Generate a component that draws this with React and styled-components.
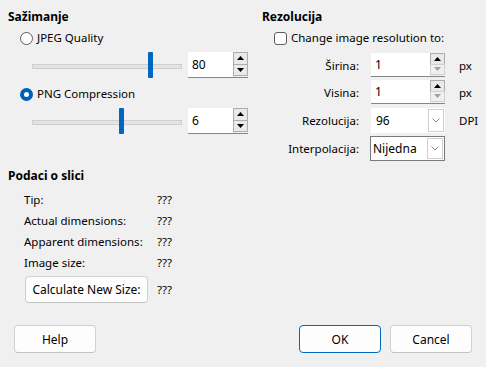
import React from "react";
import styled, { createGlobalStyle } from "styled-components";

const Global = createGlobalStyle`
  html, body { margin: 0; padding: 0; background: #f0f0f0; }
  body { font-family: "Noto Sans", "Open Sans", sans-serif; font-size: 11.5px; color: #000; }
  * { box-sizing: border-box; }
`;

const Page = styled.div`
  width: 486px;
  height: 367px;
  padding: 9px 14px 0 8px;
  display: flex;
  flex-direction: column;
`;

const Top = styled.div`
  display: grid;
  grid-template-columns: 254px 1fr;
`;

const Column = styled.div`
  display: flex;
  flex-direction: column;
`;

const Title = styled.div`
  font-weight: 700;
  font-size: 12px;
  line-height: 16px;
  height: 16px;
  margin-top: ${(p) => p.$mt || 0}px;
`;

const OptionRow = styled.label`
  display: flex;
  align-items: center;
  gap: 4px;
  height: 16px;
  margin-top: ${(p) => p.$mt}px;
  padding-left: ${(p) => p.$pl}px;
  line-height: 16px;
`;

const Radio = styled.span`
  width: 13px;
  height: 13px;
  border-radius: 50%;
  border: ${(p) => (p.$checked ? "4px solid #005fb8" : "1px solid #5d5d5d")};
  background: #fff;
  flex: none;
`;

const Check = styled.span`
  width: 13px;
  height: 13px;
  border-radius: 3px;
  border: 1px solid #5d5d5d;
  background: #fdfdfd;
  flex: none;
`;

const SliderRow = styled.div`
  display: flex;
  align-items: center;
  height: 26px;
  margin-top: ${(p) => p.$mt}px;
  padding-left: 24px;
  gap: 6px;
`;

const Track = styled.div`
  position: relative;
  width: 150px;
  height: 26px;
  &::before {
    content: "";
    position: absolute;
    left: 0;
    right: 0;
    top: 12px;
    height: 3px;
    background: #e3e3e3;
    border: 1px solid #cfcfcf;
  }
`;

const Thumb = styled.div`
  position: absolute;
  top: 0;
  width: 5px;
  height: 26px;
  background: #0067c0;
  border-radius: 1px;
`;

const Spin = styled.div`
  display: flex;
  width: ${(p) => p.$w}px;
  height: ${(p) => p.$h}px;
  border-bottom: 1px solid #868686;
  background: #fff;
`;

const SpinText = styled.div`
  flex: 1;
  padding-left: 4px;
  display: flex;
  align-items: center;
  font-size: 12px;
`;

const SpinButtons = styled.div`
  width: 15px;
  display: flex;
  flex-direction: column;
  background: #f0f0f0;
  padding-bottom: 1px;
`;

const SpinBtn = styled.div`
  flex: 1;
  border: 1px solid #adadad;
  display: flex;
  align-items: center;
  justify-content: center;
  margin-top: ${(p) => (p.$down ? "-1px" : "0")};
  border-color: ${(p) => (p.$disabled ? "#d0d0d0" : "#adadad")};
  background: ${(p) => (p.$disabled ? "#f0f0f0" : "#e9e9e9")};
`;

const Arrow = ({ down, color }) => (
  <svg width="7" height="4" viewBox="0 0 7 4">
    <path d={down ? "M0 0 H7 L3.5 4 Z" : "M0 4 H7 L3.5 0 Z"} fill={color} />
  </svg>
);

const SpinBox = ({ value, w, h, downDisabled }) => (
  <Spin $w={w} $h={h}>
    <SpinText>{value}</SpinText>
    <SpinButtons>
      <SpinBtn>
        <Arrow color="#000" />
      </SpinBtn>
      <SpinBtn $down $disabled={downDisabled}>
        <Arrow down color={downDisabled ? "#a0a0a0" : "#000"} />
      </SpinBtn>
    </SpinButtons>
  </Spin>
);

const Form = styled.div`
  display: grid;
  grid-template-columns: 109px 74px auto;
  grid-template-rows: 24px 24px 26px 25px;
  row-gap: 3px;
  margin-top: 7px;
  align-items: center;
`;

const FormLabel = styled.div`
  text-align: right;
  padding-right: 12px;
  white-space: nowrap;
`;

const Unit = styled.div`
  padding-left: 14px;
`;

const Combo = styled.div`
  display: flex;
  height: ${(p) => p.$h}px;
  background: #fff;
  border: 1px solid ${(p) => (p.$focus ? "#7a7a7a" : "transparent")};
  margin-left: ${(p) => (p.$focus ? -1 : 0)}px;
  width: ${(p) => (p.$focus ? 75 : 74)}px;
`;

const ComboText = styled.div`
  flex: 1;
  display: flex;
  align-items: center;
  font-size: 12px;
  padding-left: ${(p) => (p.$focus ? 2 : 4)}px;
`;

const ComboBtn = styled.div`
  width: 16px;
  margin: ${(p) => (p.$focus ? "1px" : "0")};
  border: 1px solid #cfcfcf;
  display: flex;
  align-items: center;
  justify-content: center;
  background: #fff;
`;

const Chevron = () => (
  <svg width="8" height="5" viewBox="0 0 8 5">
    <path d="M0.5 0.5 L4 4 L7.5 0.5" fill="none" stroke="#8a8a8a" strokeWidth="1" />
  </svg>
);

const InfoGrid = styled.div`
  display: grid;
  grid-template-columns: 133px auto;
  grid-template-rows: repeat(4, 16px) 28px;
  padding-left: 16px;
  margin-top: 7px;
  row-gap: 5px;
  align-items: center;
  width: 254px;
`;

const InfoValue = styled.div``;

const Button = styled.button`
  font-family: inherit;
  font-size: 12px;
  color: #000;
  height: ${(p) => p.$h || 28}px;
  width: ${(p) => p.$w}px;
  background: #fdfdfd;
  border: 1px solid ${(p) => (p.$primary ? "#0067c0" : "#d0d0d0")};
  border-bottom-color: ${(p) => (p.$primary ? "#0067c0" : "#c2c2c2")};
  border-radius: 4px;
  padding: 0;
`;

const CalcRow = styled.div`
  grid-column: 1 / 3;
  display: flex;
  align-items: center;
  height: 27px;
  margin-left: 1px;
  margin-top: 1px;
  gap: 9px;
`;

const Footer = styled.div`
  display: flex;
  align-items: center;
  margin-top: auto;
  margin-bottom: 14px;
  padding-left: 6px;
  gap: 9px;
`;

const Spacer = styled.div`
  flex: 1;
`;

export default function App() {
  return (
    <>
      <Global />
      <Page>
        <Top>
          <Column>
            <Title>Sažimanje</Title>
            <OptionRow $mt={5} $pl={12}>
              <Radio />
              JPEG Quality
            </OptionRow>
            <SliderRow $mt={6}>
              <Track>
                <Thumb style={{ left: `${((80 - 1) / 99) * 145}px` }} />
              </Track>
              <SpinBox value="80" w={60} h={26} />
            </SliderRow>
            <OptionRow $mt={8} $pl={12}>
              <Radio $checked />
              PNG Compression
            </OptionRow>
            <SliderRow $mt={6}>
              <Track>
                <Thumb style={{ left: `${(6 / 10) * 145}px` }} />
              </Track>
              <SpinBox value="6" w={60} h={26} />
            </SliderRow>
          </Column>
          <Column>
            <Title>Rezolucija</Title>
            <OptionRow $mt={5} $pl={12}>
              <Check />
              Change image resolution to:
            </OptionRow>
            <Form>
              <FormLabel>Širina:</FormLabel>
              <SpinBox value="1" w={74} h={24} downDisabled />
              <Unit>px</Unit>
              <FormLabel>Visina:</FormLabel>
              <SpinBox value="1" w={74} h={24} downDisabled />
              <Unit>px</Unit>
              <FormLabel>Rezolucija:</FormLabel>
              <Combo $h={25}>
                <ComboText>96</ComboText>
                <ComboBtn>
                  <Chevron />
                </ComboBtn>
              </Combo>
              <Unit>DPI</Unit>
              <FormLabel>Interpolacija:</FormLabel>
              <Combo $h={25} $focus>
                <ComboText $focus>Nijedna</ComboText>
                <ComboBtn $focus>
                  <Chevron />
                </ComboBtn>
              </Combo>
              <div />
            </Form>
          </Column>
        </Top>
        <Title $mt={7}>Podaci o slici</Title>
        <InfoGrid>
          <div>Tip:</div>
          <InfoValue>???</InfoValue>
          <div>Actual dimensions:</div>
          <InfoValue>???</InfoValue>
          <div>Apparent dimensions:</div>
          <InfoValue>???</InfoValue>
          <div>Image size:</div>
          <InfoValue>???</InfoValue>
          <CalcRow>
            <Button $w={123} $h={27}>Calculate New Size:</Button>
            ???
          </CalcRow>
        </InfoGrid>
        <Footer>
          <Button $w={82}>Help</Button>
          <Spacer />
          <Button $w={82} $primary>OK</Button>
          <Button $w={82}>Cancel</Button>
        </Footer>
      </Page>
    </>
  );
}
